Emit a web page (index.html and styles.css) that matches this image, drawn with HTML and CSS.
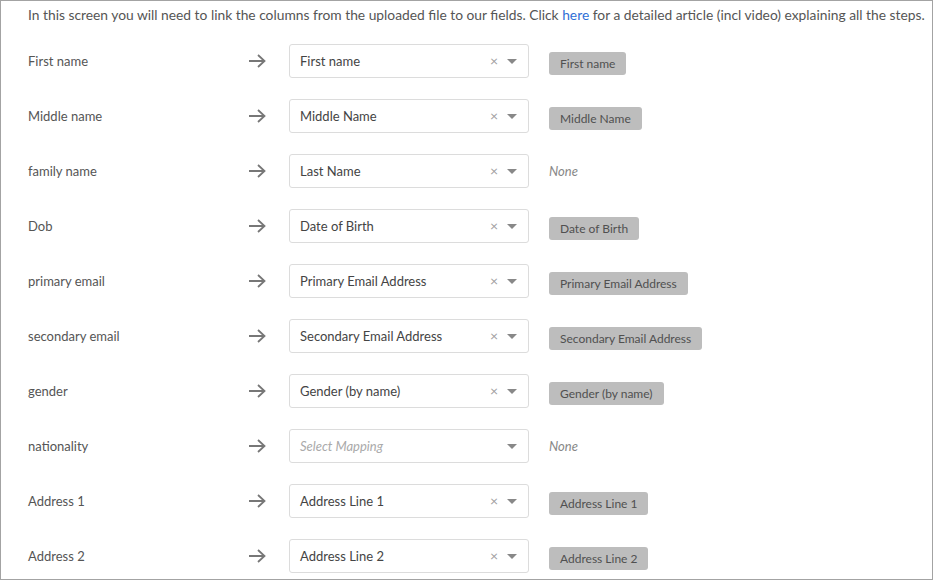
FILE: index.html
```html
<!DOCTYPE html>
<html>
<head>
<meta charset="utf-8">
<link rel="stylesheet" href="styles.css">
</head>
<body>
<div class="frame">
  <p class="intro">In this screen you will need to link the columns from the uploaded file to our fields. Click <a href="#">here</a> for a detailed article (incl video) explaining all the steps.</p>
  <div class="rows">
    <div class="row">
      <div class="label">First name</div>
      <div class="arrow"><svg width="18" height="14" viewBox="0 0 18 14"><path d="M1 7H16.5M10 1L16.5 7L10 13" fill="none" stroke="#777" stroke-width="1.8"/></svg></div>
      <div class="select"><span class="value">First name</span><span class="clear">×</span><span class="caret"></span></div>
      <div class="result"><span class="tag">First name</span></div>
    </div>
    <div class="row">
      <div class="label">Middle name</div>
      <div class="arrow"><svg width="18" height="14" viewBox="0 0 18 14"><path d="M1 7H16.5M10 1L16.5 7L10 13" fill="none" stroke="#777" stroke-width="1.8"/></svg></div>
      <div class="select"><span class="value">Middle Name</span><span class="clear">×</span><span class="caret"></span></div>
      <div class="result"><span class="tag">Middle Name</span></div>
    </div>
    <div class="row">
      <div class="label">family name</div>
      <div class="arrow"><svg width="18" height="14" viewBox="0 0 18 14"><path d="M1 7H16.5M10 1L16.5 7L10 13" fill="none" stroke="#777" stroke-width="1.8"/></svg></div>
      <div class="select"><span class="value">Last Name</span><span class="clear">×</span><span class="caret"></span></div>
      <div class="result"><span class="none">None</span></div>
    </div>
    <div class="row">
      <div class="label">Dob</div>
      <div class="arrow"><svg width="18" height="14" viewBox="0 0 18 14"><path d="M1 7H16.5M10 1L16.5 7L10 13" fill="none" stroke="#777" stroke-width="1.8"/></svg></div>
      <div class="select"><span class="value">Date of Birth</span><span class="clear">×</span><span class="caret"></span></div>
      <div class="result"><span class="tag">Date of Birth</span></div>
    </div>
    <div class="row">
      <div class="label">primary email</div>
      <div class="arrow"><svg width="18" height="14" viewBox="0 0 18 14"><path d="M1 7H16.5M10 1L16.5 7L10 13" fill="none" stroke="#777" stroke-width="1.8"/></svg></div>
      <div class="select"><span class="value">Primary Email Address</span><span class="clear">×</span><span class="caret"></span></div>
      <div class="result"><span class="tag">Primary Email Address</span></div>
    </div>
    <div class="row">
      <div class="label">secondary email</div>
      <div class="arrow"><svg width="18" height="14" viewBox="0 0 18 14"><path d="M1 7H16.5M10 1L16.5 7L10 13" fill="none" stroke="#777" stroke-width="1.8"/></svg></div>
      <div class="select"><span class="value">Secondary Email Address</span><span class="clear">×</span><span class="caret"></span></div>
      <div class="result"><span class="tag">Secondary Email Address</span></div>
    </div>
    <div class="row">
      <div class="label">gender</div>
      <div class="arrow"><svg width="18" height="14" viewBox="0 0 18 14"><path d="M1 7H16.5M10 1L16.5 7L10 13" fill="none" stroke="#777" stroke-width="1.8"/></svg></div>
      <div class="select"><span class="value">Gender (by name)</span><span class="clear">×</span><span class="caret"></span></div>
      <div class="result"><span class="tag">Gender (by name)</span></div>
    </div>
    <div class="row">
      <div class="label">nationality</div>
      <div class="arrow"><svg width="18" height="14" viewBox="0 0 18 14"><path d="M1 7H16.5M10 1L16.5 7L10 13" fill="none" stroke="#777" stroke-width="1.8"/></svg></div>
      <div class="select"><span class="value placeholder">Select Mapping</span><span class="caret"></span></div>
      <div class="result"><span class="none">None</span></div>
    </div>
    <div class="row">
      <div class="label">Address 1</div>
      <div class="arrow"><svg width="18" height="14" viewBox="0 0 18 14"><path d="M1 7H16.5M10 1L16.5 7L10 13" fill="none" stroke="#777" stroke-width="1.8"/></svg></div>
      <div class="select"><span class="value">Address Line 1</span><span class="clear">×</span><span class="caret"></span></div>
      <div class="result"><span class="tag">Address Line 1</span></div>
    </div>
    <div class="row">
      <div class="label">Address 2</div>
      <div class="arrow"><svg width="18" height="14" viewBox="0 0 18 14"><path d="M1 7H16.5M10 1L16.5 7L10 13" fill="none" stroke="#777" stroke-width="1.8"/></svg></div>
      <div class="select"><span class="value">Address Line 2</span><span class="clear">×</span><span class="caret"></span></div>
      <div class="result"><span class="tag">Address Line 2</span></div>
    </div>
  </div>
</div>
</body>
</html>
```
FILE: styles.css
```css
html, body {
  margin: 0;
  padding: 0;
  background: #fff;
}
body {
  font-family: Lato, "Open Sans", sans-serif;
  font-size: 13px;
  color: #555;
}
.frame {
  box-sizing: border-box;
  width: 933px;
  height: 580px;
  border: 1px solid #a3a3a3;
  overflow: hidden;
  padding-left: 27px;
}
.intro {
  margin: 0 0 20px 0;
  padding-top: 5px;
  line-height: 18px;
  font-size: 13.8px;
  color: #555;
  white-space: nowrap;
}
.intro a {
  color: #2f6fd6;
  text-decoration: none;
}
.rows {
  display: flex;
  flex-direction: column;
  gap: 21px;
}
.row {
  display: flex;
  align-items: center;
  height: 34px;
}
.label {
  width: 220px;
  flex: none;
  color: #555;
}
.arrow {
  width: 41px;
  flex: none;
  display: flex;
  align-items: center;
}
.arrow svg {
  display: block;
}
.select {
  box-sizing: border-box;
  width: 240px;
  height: 34px;
  flex: none;
  border: 1px solid #dcdcdc;
  border-radius: 3px;
  display: flex;
  align-items: center;
  padding: 0 11px 0 10px;
  color: #444;
}
.value {
  flex: 1;
}
.placeholder {
  color: #aaa;
  font-style: italic;
}
.clear {
  color: #a0a0a0;
  font-size: 14px;
  margin-right: 9px;
  line-height: 1;
}
.caret {
  width: 0;
  height: 0;
  border-left: 5px solid transparent;
  border-right: 5px solid transparent;
  border-top: 5px solid #888;
}
.result {
  margin-left: 20px;
  align-self: stretch;
  display: flex;
  align-items: center;
}
.tag {
  margin-top: 5px;
  background: #bdbdbd;
  border-radius: 3px;
  height: 23px;
  line-height: 23px;
  padding: 0 11px;
  font-size: 12px;
  color: #505050;
}
.none {
  font-style: italic;
  color: #888;
}
```
